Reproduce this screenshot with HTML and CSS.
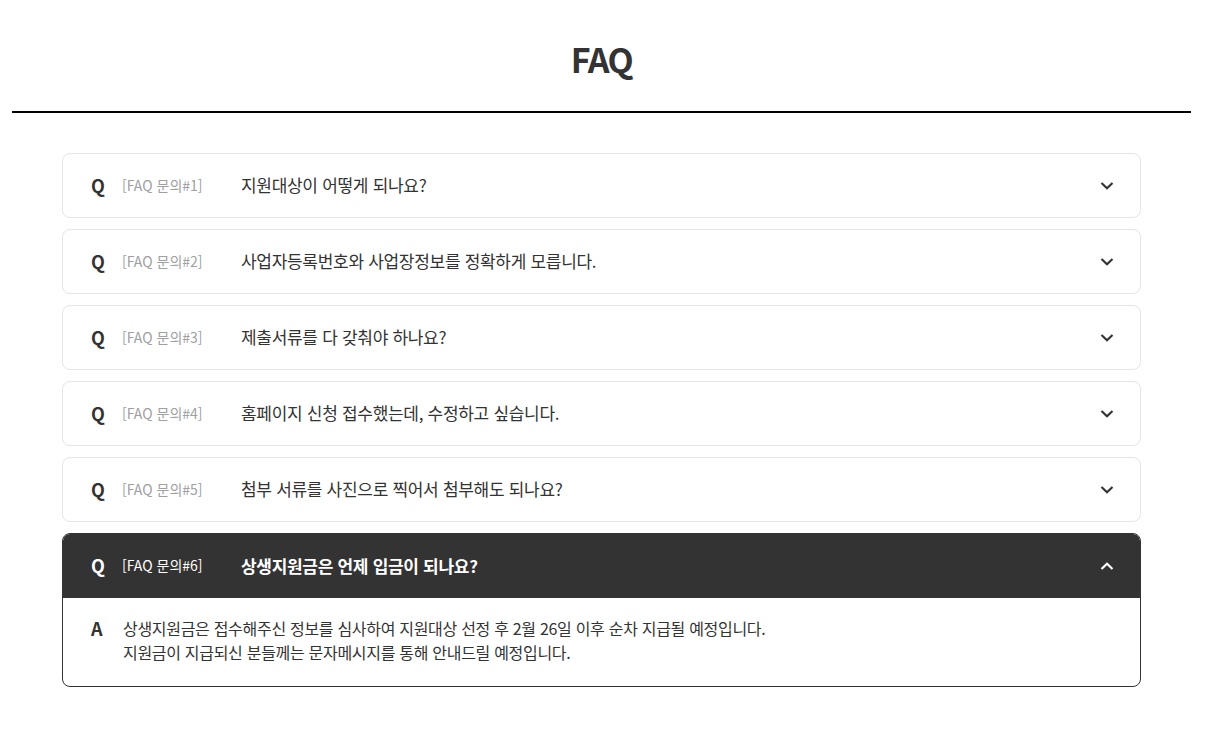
FILE: index.html
```html
<!DOCTYPE html>
<html lang="ko">
<head>
    <meta charset="UTF-8">
    <meta name="viewport" content="width=device-width, initial-scale=1.0">
    <title>FAQ</title>
    <link rel="stylesheet" href="styles.css">
</head>
<body>
    <div class="wrap">
        <h1 class="title">FAQ</h1>

        <ul class="faq-list">
            <li class="faq-item">
                <div class="faq-q">
                    <span class="mark">Q</span>
                    <span class="num">[FAQ 문의#1]</span>
                    <span class="text">지원대상이 어떻게 되나요?</span>
                    <svg class="arrow" width="14" height="9" viewBox="0 0 14 9"><polyline points="1.5,2 7,7.2 12.5,2" fill="none" stroke="currentColor" stroke-width="2.2"/></svg>
                </div>
            </li>
            <li class="faq-item">
                <div class="faq-q">
                    <span class="mark">Q</span>
                    <span class="num">[FAQ 문의#2]</span>
                    <span class="text">사업자등록번호와 사업장정보를 정확하게 모릅니다.</span>
                    <svg class="arrow" width="14" height="9" viewBox="0 0 14 9"><polyline points="1.5,2 7,7.2 12.5,2" fill="none" stroke="currentColor" stroke-width="2.2"/></svg>
                </div>
            </li>
            <li class="faq-item">
                <div class="faq-q">
                    <span class="mark">Q</span>
                    <span class="num">[FAQ 문의#3]</span>
                    <span class="text">제출서류를 다 갖춰야 하나요?</span>
                    <svg class="arrow" width="14" height="9" viewBox="0 0 14 9"><polyline points="1.5,2 7,7.2 12.5,2" fill="none" stroke="currentColor" stroke-width="2.2"/></svg>
                </div>
            </li>
            <li class="faq-item">
                <div class="faq-q">
                    <span class="mark">Q</span>
                    <span class="num">[FAQ 문의#4]</span>
                    <span class="text">홈페이지 신청 접수했는데, 수정하고 싶습니다.</span>
                    <svg class="arrow" width="14" height="9" viewBox="0 0 14 9"><polyline points="1.5,2 7,7.2 12.5,2" fill="none" stroke="currentColor" stroke-width="2.2"/></svg>
                </div>
            </li>
            <li class="faq-item">
                <div class="faq-q">
                    <span class="mark">Q</span>
                    <span class="num">[FAQ 문의#5]</span>
                    <span class="text">첨부 서류를 사진으로 찍어서 첨부해도 되나요?</span>
                    <svg class="arrow" width="14" height="9" viewBox="0 0 14 9"><polyline points="1.5,2 7,7.2 12.5,2" fill="none" stroke="currentColor" stroke-width="2.2"/></svg>
                </div>
            </li>
            <li class="faq-item open">
                <div class="faq-q">
                    <span class="mark">Q</span>
                    <span class="num">[FAQ 문의#6]</span>
                    <span class="text">상생지원금은 언제 입금이 되나요?</span>
                    <svg class="arrow" width="14" height="9" viewBox="0 0 14 9"><polyline points="1.5,7 7,1.8 12.5,7" fill="none" stroke="currentColor" stroke-width="2.2"/></svg>
                </div>
                <div class="faq-a">
                    <span class="mark">A</span>
                    <p class="answer">상생지원금은 접수해주신 정보를 심사하여 지원대상 선정 후 2월 26일 이후 순차 지급될 예정입니다.<br>지원금이 지급되신 분들께는 문자메시지를 통해 안내드릴 예정입니다.</p>
                </div>
            </li>
        </ul>
    </div>
</body>
</html>
```

FILE: styles.css
```css
body {
    margin: 0;
    background-color: #fff;
    color: #333;
    font-family: 'Noto Sans CJK KR', 'Noto Sans', sans-serif;
}
.wrap {
    width: 1203px;
    padding-bottom: 40px;
}
.title {
    margin: 0 12px;
    padding: 38px 0 31px;
    text-align: center;
    font-size: 34px;
    font-weight: 700;
    line-height: 42px;
    letter-spacing: -1.5px;
    color: #333;
    border-bottom: 2px solid #000;
}
.faq-list {
    list-style: none;
    margin: 40px 62px 0;
    padding: 0;
    display: flex;
    flex-direction: column;
    gap: 11px;
}
.faq-item {
    border: 1px solid #e5e5e5;
    border-radius: 8px;
    overflow: hidden;
}
.faq-q {
    height: 61px;
    display: flex;
    align-items: center;
    padding: 0 26px 2px 28px;
}
.mark {
    width: 31px;
    font-size: 18px;
    font-weight: 700;
    color: #333;
}
.num {
    width: 119px;
    font-size: 14px;
    color: #a0a0a0;
}
.text {
    flex: 1;
    font-size: 17px;
    color: #333;
    letter-spacing: -0.3px;
}
.arrow {
    color: #333;
    margin-top: 2px;
}
.faq-item.open {
    border-color: #333;
}
.faq-item.open .faq-q {
    background-color: #333;
    height: 62px;
}
.faq-item.open .faq-q .mark,
.faq-item.open .faq-q .num,
.faq-item.open .faq-q .text,
.faq-item.open .faq-q .arrow {
    color: #fff;
}
.faq-item.open .faq-q .text {
    font-weight: 700;
}
.faq-a {
    display: flex;
    padding: 18px 28px 22px 28px;
}
.faq-a .mark {
    width: 32px;
    line-height: 24px;
}
.answer {
    margin: 0;
    font-size: 16px;
    line-height: 24px;
    letter-spacing: -0.3px;
    color: #333;
}
```
